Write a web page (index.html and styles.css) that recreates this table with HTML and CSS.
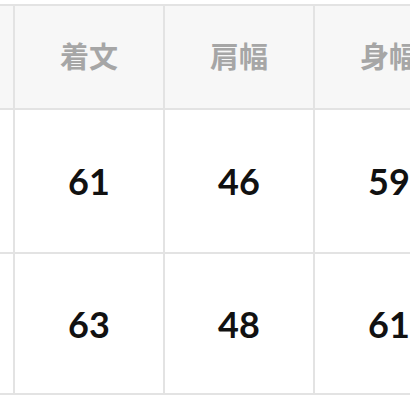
FILE: index.html
```html
<!DOCTYPE html>
<html lang="ja">
<head>
<meta charset="utf-8">
<link rel="stylesheet" href="styles.css">
</head>
<body>
<div class="table">
  <div class="cell head"></div>
  <div class="cell head">着文</div>
  <div class="cell head">肩幅</div>
  <div class="cell head">身幅</div>
  <div class="cell"></div>
  <div class="cell num">61</div>
  <div class="cell num">46</div>
  <div class="cell num">59</div>
  <div class="cell"></div>
  <div class="cell num">63</div>
  <div class="cell num">48</div>
  <div class="cell num">61</div>
</div>
</body>
</html>
```
FILE: styles.css
```css
html, body {
  margin: 0;
  padding: 0;
  background: #ffffff;
  overflow: hidden;
  width: 410px;
  height: 410px;
}
body {
  padding-top: 4px;
  box-sizing: border-box;
}
.table {
  display: grid;
  grid-template-columns: 13px 148px 148px 148px;
  grid-template-rows: 102px 142px 139px;
  gap: 2px;
  border-top: 2px solid #e3e3e3;
  border-bottom: 2px solid #e3e3e3;
  background: #e3e3e3;
  width: max-content;
}
.cell {
  background: #ffffff;
  display: flex;
  align-items: center;
  justify-content: center;
  white-space: nowrap;
  overflow: visible;
}
.head {
  background: #f7f7f7;
  color: #a6a6a6;
  font-family: "Noto Sans CJK JP", "Noto Sans", sans-serif;
  font-weight: 700;
  font-size: 29px;
  padding-bottom: 5px;
  box-sizing: border-box;
}
.num {
  color: #111111;
  font-family: Lato, "Noto Sans", sans-serif;
  font-weight: 700;
  font-size: 36px;
}
```
